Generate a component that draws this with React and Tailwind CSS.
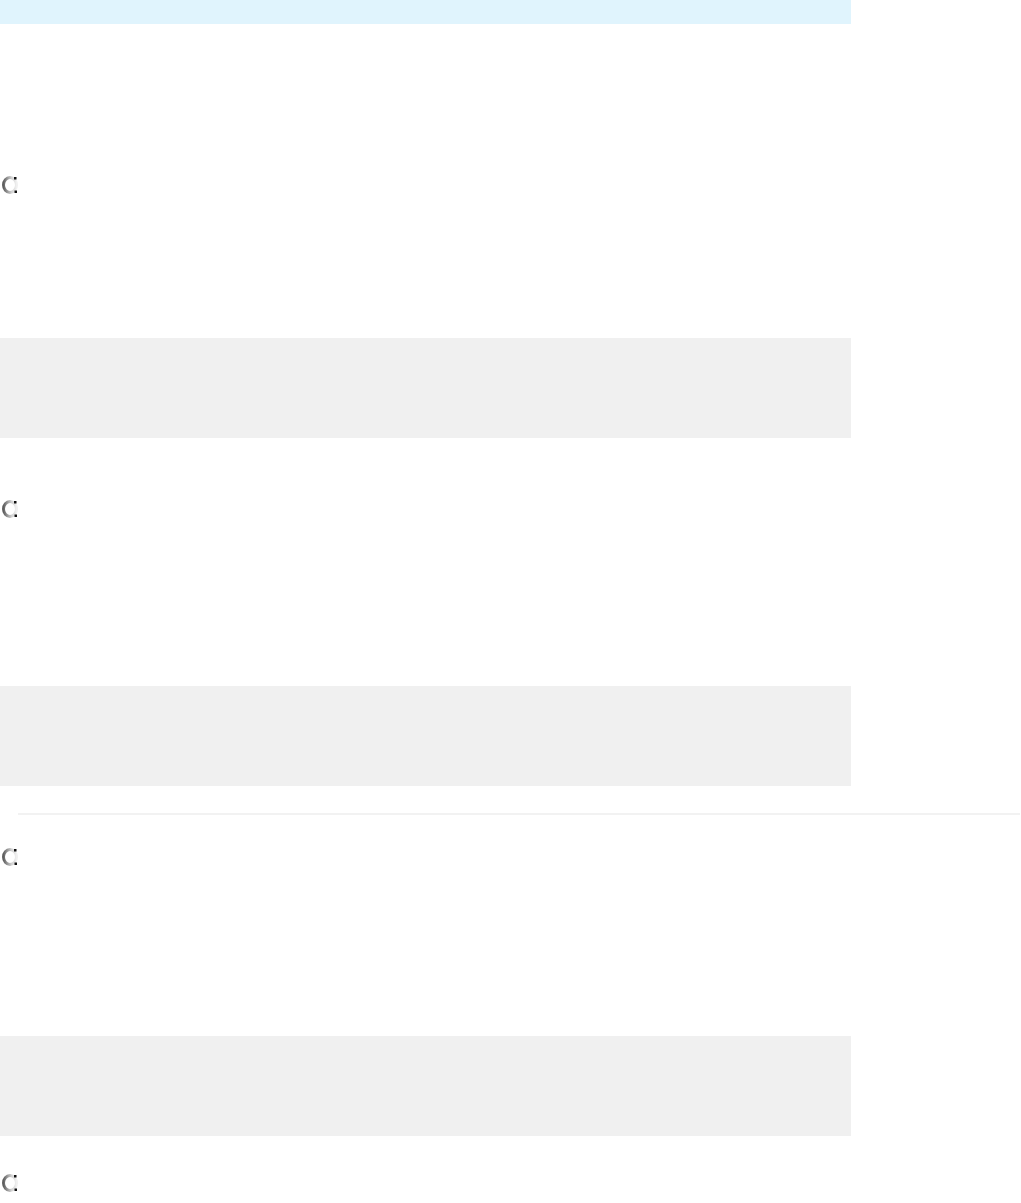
import React from "react";

function Ring() {
  return (
    <svg width="19" height="20" viewBox="0 0 19 20" className="block">
      <defs>
        <linearGradient id="rg" x1="0" y1="0" x2="1" y2="0">
          <stop offset="0" stopColor="#5f5f5f" />
          <stop offset="0.6" stopColor="#cfcfcf" />
          <stop offset="1" stopColor="#f0f0f0" />
        </linearGradient>
      </defs>
      <ellipse cx="9" cy="10" rx="6.5" ry="7.5" fill="none" stroke="url(#rg)" strokeWidth="3" />
      <rect x="13" y="2" width="2.5" height="2.5" fill="#111" />
      <rect x="13.5" y="15.5" width="2.5" height="2.5" fill="#111" />
    </svg>
  );
}

function Grey() {
  return <div className="w-[851px] h-[100px] bg-[#f0f0f0]" />;
}

export default function App() {
  return (
    <div className="w-[1021px] h-[1203px] bg-white overflow-hidden flex flex-col">
      <div className="w-[851px] h-[24px] bg-[#e0f4fd]" />
      <div className="mt-[151px] pl-[1px]"><Ring /></div>
      <div className="mt-[143px]"><Grey /></div>
      <div className="mt-[61px] pl-[1px]"><Ring /></div>
      <div className="mt-[167px]"><Grey /></div>
      <div className="mt-[27px] ml-[18px] w-[1002px] h-[2px] bg-[#f2f2f2]" />
      <div className="mt-[32px] pl-[1px]"><Ring /></div>
      <div className="mt-[169px]"><Grey /></div>
      <div className="mt-[37px] pl-[1px]"><Ring /></div>
    </div>
  );
}
